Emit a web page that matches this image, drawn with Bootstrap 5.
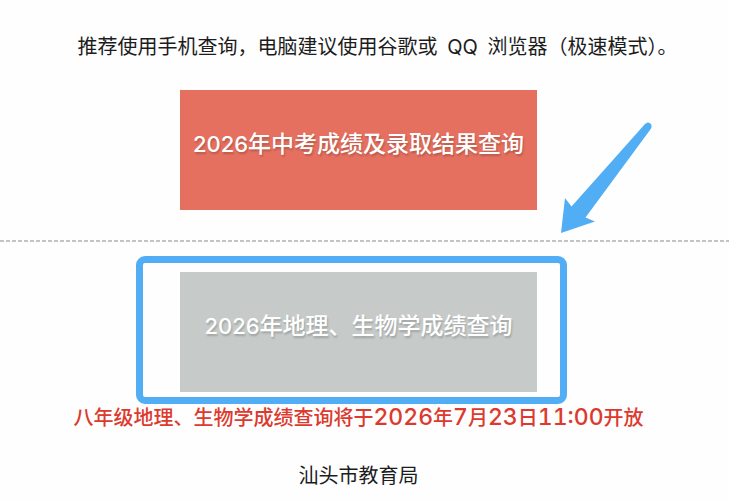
<!DOCTYPE html>
<html lang="zh-CN">
<head>
<meta charset="utf-8">
<meta name="viewport" content="width=device-width, initial-scale=1">
<title>汕头市教育局 成绩查询</title>
<link rel="stylesheet" href="https://cdn.jsdelivr.net/npm/bootstrap@5.3.0/dist/css/bootstrap.min.css">
<style>
  body { font-family: Inter, "Noto Sans CJK SC", sans-serif; font-size: 20px; line-height: 30px; color: #1c1c1c; background: #fefefe; }
  .site-main { padding: 32px 12px 0 0; }
  .tip { padding-left: 38px; }
  .query-btn { width: 49vw; min-width: 340px; height: 120px; padding: 0 0 12px; border: 0; border-radius: 0; font-size: 23px; font-weight: 500; color: #fff; text-shadow: 1px 2px 2px rgba(0,0,0,.2); white-space: nowrap; }
  .year-text { font-size: 22px; }
  .query-open, .query-open:hover { background: #e5705f; color: #fff; }
  .query-soon, .query-soon:disabled { background: #c6cbca; color: #fff; opacity: 1; }
  .dash-line { height: 2px; margin: 30px -12px 30px 0; border: 0; opacity: 1; background: repeating-linear-gradient(90deg, #c3c3c5 0 4px, transparent 4px 6px); }
  .focus-frame { inset: -16px -30px -12px -44px; border: 7px solid #51aef4; border-radius: 9px; pointer-events: none; }
  .arrow-mark { left: 380px; top: 32px; pointer-events: none; }
  .notice { margin-top: 10px; color: #dc3a2e; font-weight: 500; white-space: nowrap; }
  .date-text { font-size: 23px; font-variant-numeric: tabular-nums; }
  .site-footer { padding: 28px 12px 6px 0; }
</style>
</head>
<body>
<main class="site-main text-center">
  <p class="tip mb-0">推荐使用手机查询，电脑建议使用谷歌或 <span class="mx-1">QQ</span> 浏览器（极速模式）。</p>
  <div class="d-flex justify-content-center mt-4 pt-1">
    <div class="position-relative">
      <button type="button" class="btn query-btn query-open"><span class="year-text">2026</span>年中考成绩及录取结果查询</button>
      <svg class="arrow-mark position-absolute" width="100" height="115" viewBox="560 122 100 115" aria-hidden="true">
        <path d="M645 124 Q648 121 651 124 Q652.500 127 650 130 L585.500 217.500 L595 221.500 L561 233 L565 198 L571.500 206.500 Z" fill="#51aef4"/>
      </svg>
    </div>
  </div>
  <hr class="dash-line">
  <div class="d-flex justify-content-center">
    <div class="position-relative">
      <button type="button" class="btn query-btn query-soon" disabled><span class="year-text">2026</span>年地理、生物学成绩查询</button>
      <div class="focus-frame position-absolute"></div>
    </div>
  </div>
  <p class="notice mb-0">八年级地理、生物学成绩查询将于<span class="date-text">2026</span>年<span class="date-text">7</span>月<span class="date-text">23</span>日<span class="date-text">11:00</span>开放</p>
</main>
<footer class="site-footer text-center">汕头市教育局</footer>
<script src="https://cdn.jsdelivr.net/npm/bootstrap@5.3.0/dist/js/bootstrap.bundle.min.js"></script>
</body>
</html>
